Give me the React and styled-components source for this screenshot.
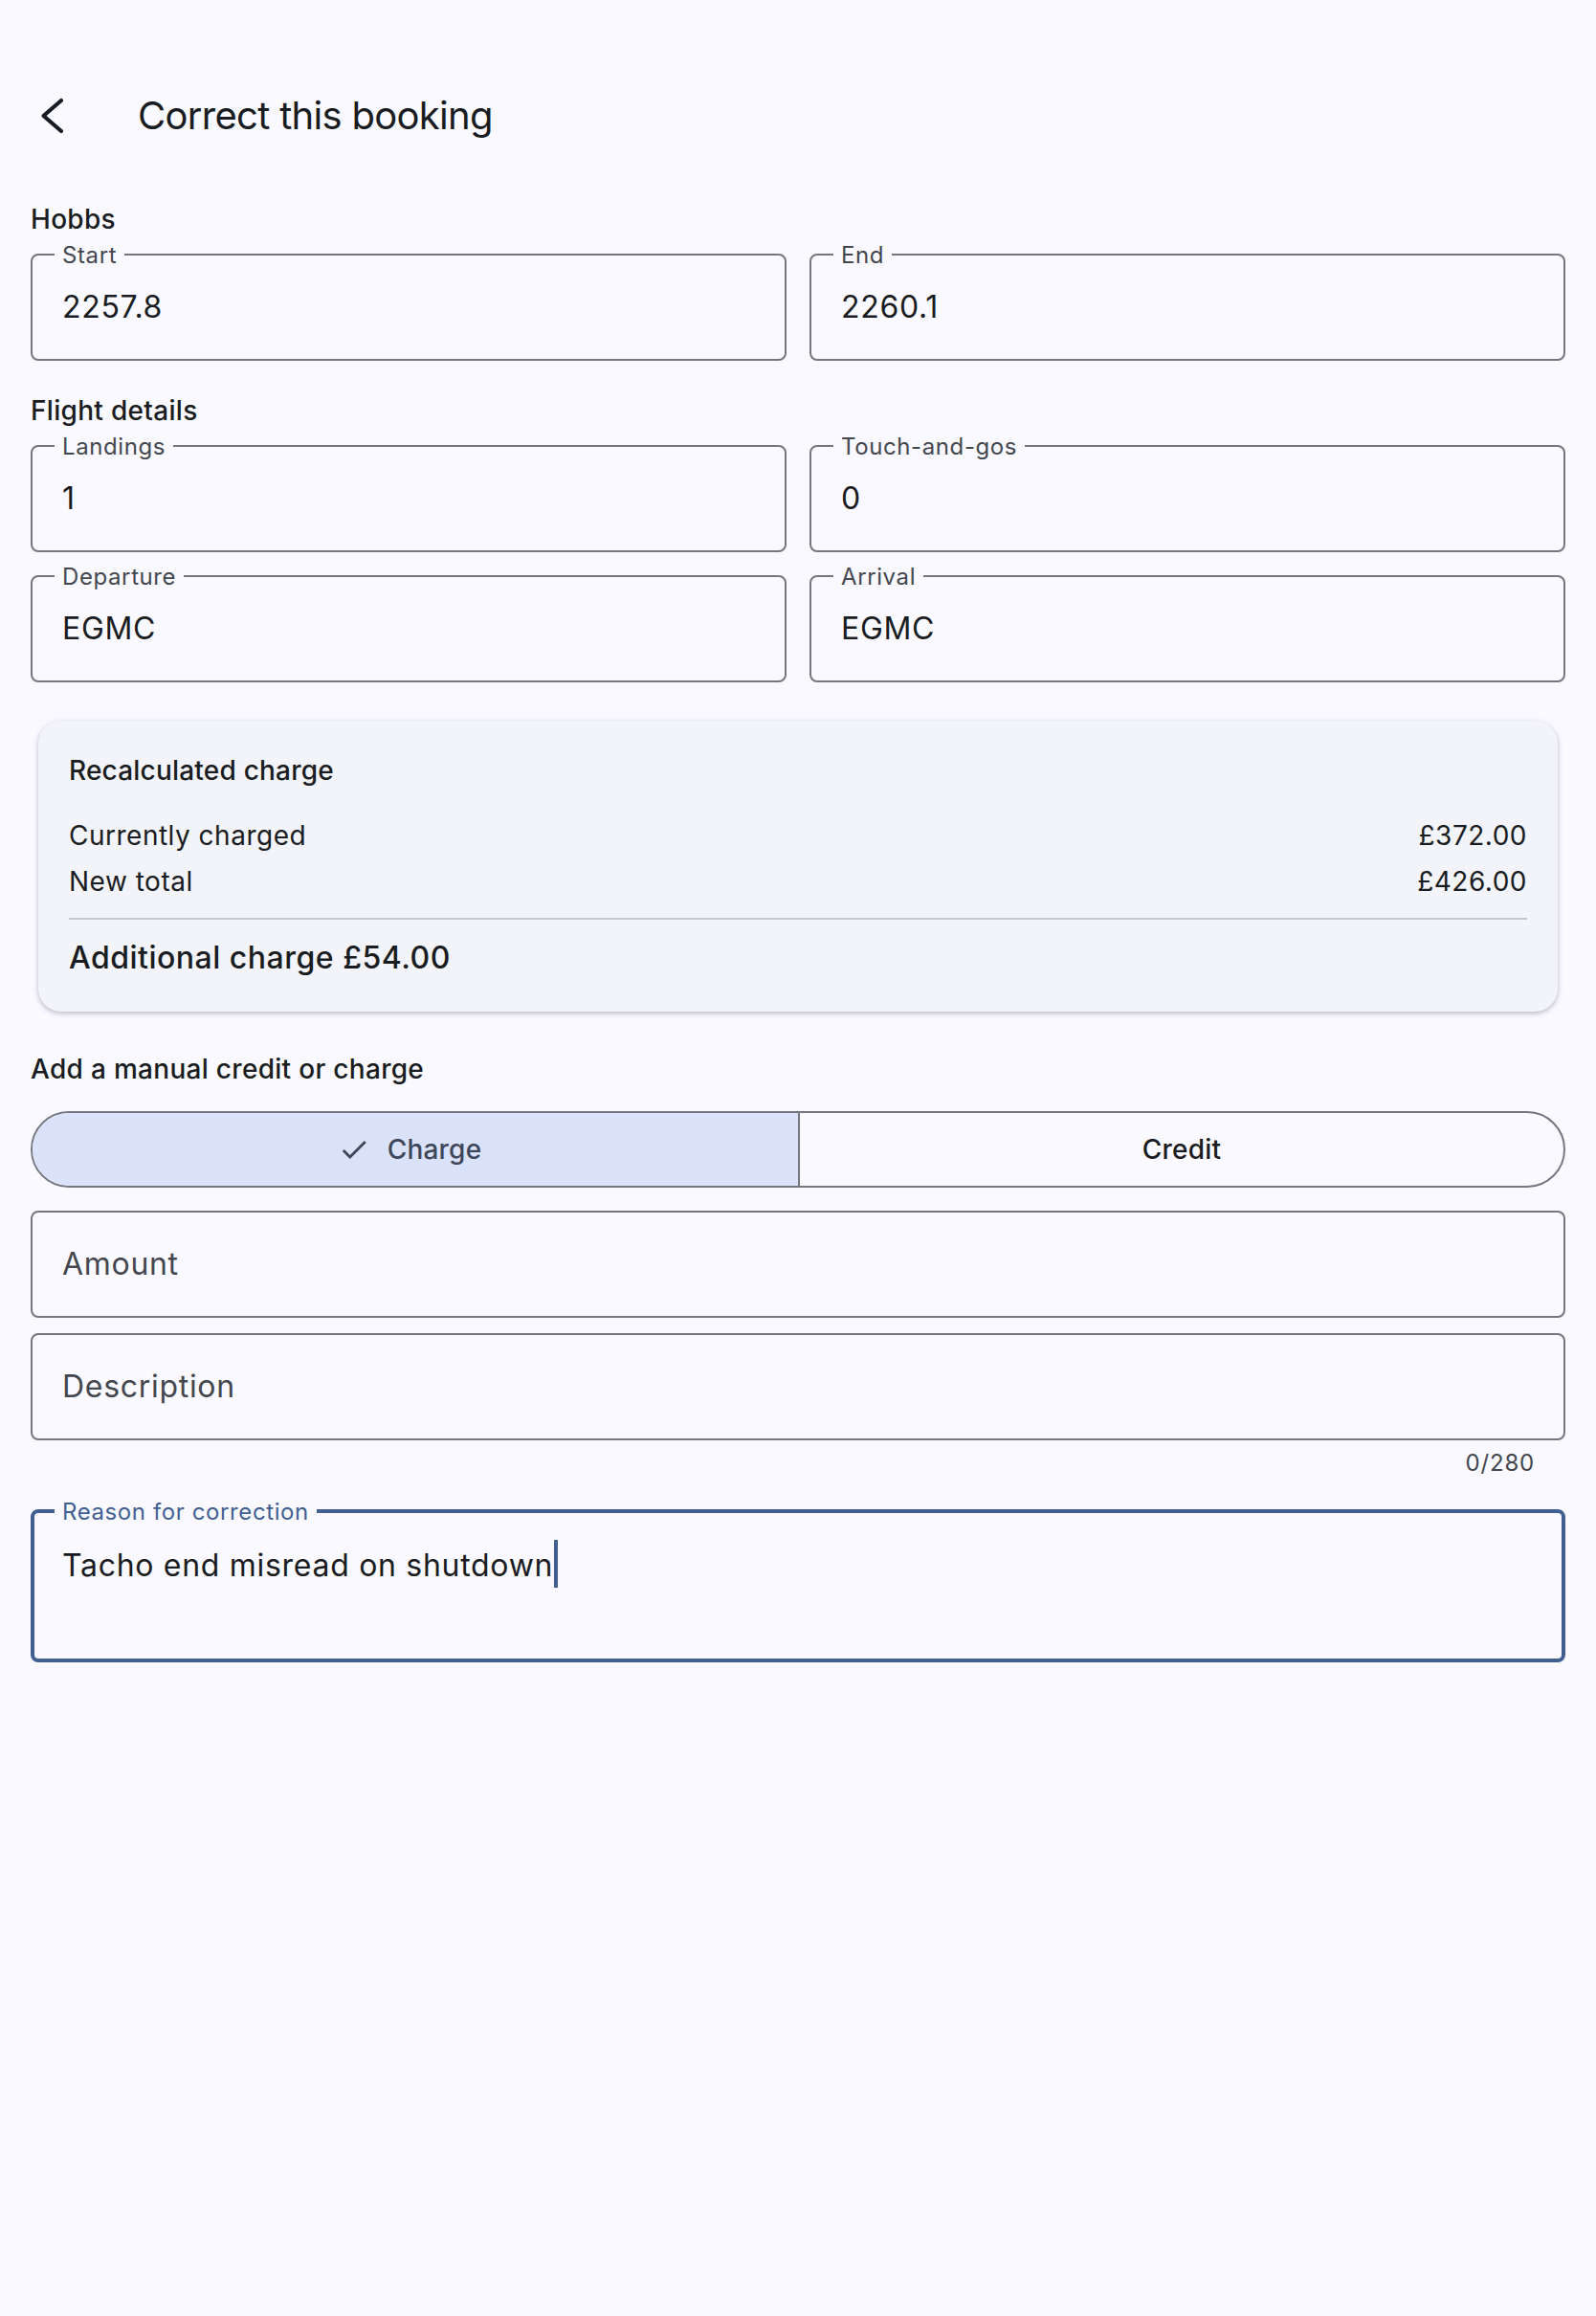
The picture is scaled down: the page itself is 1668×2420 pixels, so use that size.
import React from 'react';
import styled, { createGlobalStyle } from 'styled-components';

const GlobalStyle = createGlobalStyle`
  html, body {
    margin: 0;
    padding: 0;
    background: #f9f9ff;
  }
  body {
    font-family: Inter, Roboto, "Liberation Sans", Arial, sans-serif;
    color: #191c20;
    min-height: 2420px;
  }
  * {
    box-sizing: border-box;
  }
`;

const Screen = styled.div`
  width: 1668px;
  min-height: 2420px;
  background: #f9f9ff;
`;

const TopBar = styled.header`
  margin-top: 57px;
  height: 128px;
  display: flex;
  align-items: center;
`;

const BackButton = styled.button`
  width: 112px;
  height: 112px;
  border: none;
  background: transparent;
  padding: 0;
  display: flex;
  align-items: center;
  justify-content: center;
  color: #191c20;
  cursor: pointer;
`;

const Title = styled.h1`
  margin: 0 0 0 32px;
  font-size: 40px;
  line-height: 56px;
  font-weight: 400;
  letter-spacing: -0.7px;
  color: #191c20;
`;

const Content = styled.main`
  padding: 24px 32px 0;
`;

const SectionLabel = styled.h2`
  margin: ${(p) => p.$top || 0}px 0 ${(p) => p.$bottom || 16}px;
  font-size: 28px;
  line-height: 40px;
  font-weight: 500;
  letter-spacing: 0.3px;
  color: #191c20;
`;

const Grid = styled.div`
  display: grid;
  grid-template-columns: 1fr 1fr;
  column-gap: 24px;
  row-gap: 24px;
`;

const Field = styled.div`
  position: relative;
  min-height: ${(p) => (p.$tall ? 160 : 112)}px;
  border: ${(p) => (p.$focused ? '4px solid #415f91' : '2px solid #74777f')};
  border-radius: 8px;
  padding: ${(p) => (p.$focused ? '28px 29px' : '30px 31px')};
  margin-top: ${(p) => p.$top || 0}px;
`;

const FloatLabel = styled.span`
  position: absolute;
  top: ${(p) => (p.$focused ? -17 : -16)}px;
  left: ${(p) => (p.$focused ? 21 : 23)}px;
  padding: 0 8px;
  background: #f9f9ff;
  font-size: 24px;
  line-height: 32px;
  letter-spacing: 0.6px;
  color: ${(p) => (p.$focused ? '#415f91' : '#44474e')};
`;

const Value = styled.span`
  display: block;
  font-size: 32px;
  line-height: 48px;
  letter-spacing: 0.7px;
  color: ${(p) => (p.$hint ? '#44474e' : '#191c20')};
`;

const Caret = styled.span`
  display: inline-block;
  width: 4px;
  height: 50px;
  margin-left: 1px;
  vertical-align: -12px;
  background: #415f91;
`;

const Counter = styled.div`
  padding: 8px 32px 0 0;
  text-align: right;
  font-size: 24px;
  line-height: 32px;
  letter-spacing: 0.8px;
  color: #44474e;
`;

const Card = styled.section`
  margin: 40px 8px 0;
  padding: 32px;
  border-radius: 24px;
  background: #f3f3fa;
  box-shadow: 0 2px 4px rgba(0, 0, 0, 0.18), 0 2px 6px 2px rgba(0, 0, 0, 0.06);
`;

const CardTitle = styled.h3`
  margin: 0 0 24px;
  font-size: 28px;
  line-height: 40px;
  font-weight: 500;
  letter-spacing: 0.2px;
`;

const Line = styled.div`
  display: flex;
  justify-content: space-between;
  padding: 4px 0;
  font-size: 28px;
  line-height: 40px;
  letter-spacing: 0.5px;
`;

const Divider = styled.hr`
  margin: 14px 0 16px;
  border: none;
  height: 2px;
  background: #c4c6d0;
`;

const Total = styled.div`
  font-size: 32px;
  line-height: 48px;
  font-weight: 500;
  letter-spacing: 0.5px;
`;

const Segmented = styled.div`
  display: grid;
  grid-template-columns: 1fr 1fr;
  height: 80px;
  border: 2px solid #74777f;
  border-radius: 40px;
  overflow: hidden;
`;

const Segment = styled.button`
  display: flex;
  align-items: center;
  justify-content: center;
  gap: 18px;
  border: none;
  border-left: ${(p) => (p.$first ? 'none' : '2px solid #74777f')};
  padding: ${(p) => (p.$selected ? '0 36px 0 24px' : '0 24px')};
  background: ${(p) => (p.$selected ? '#dae2f9' : 'transparent')};
  color: ${(p) => (p.$selected ? '#3e4759' : '#191c20')};
  font-family: inherit;
  font-size: 28px;
  line-height: 40px;
  font-weight: 500;
  letter-spacing: 0.2px;
  cursor: pointer;
`;

const ChevronLeft = () => (
  <svg width="48" height="48" viewBox="0 0 48 48" fill="none">
    <polyline
      points="32,8 13.5,24 32,40"
      stroke="currentColor"
      strokeWidth="4.2"
      strokeLinecap="round"
      strokeLinejoin="round"
    />
  </svg>
);

const CheckIcon = () => (
  <svg width="34" height="34" viewBox="0 0 24 24" fill="currentColor">
    <path d="M9 16.17 4.83 12l-1.42 1.41L9 19 21 7l-1.41-1.41z" />
  </svg>
);

const TextField = ({ label, value, hint, top }) => (
  <Field $top={top}>
    {label && <FloatLabel>{label}</FloatLabel>}
    <Value $hint={hint}>{value || hint}</Value>
  </Field>
);

export default function App() {
  return (
    <Screen>
      <GlobalStyle />
      <TopBar>
        <BackButton aria-label="Back">
          <ChevronLeft />
        </BackButton>
        <Title>Correct this booking</Title>
      </TopBar>

      <Content>
        <SectionLabel>Hobbs</SectionLabel>
        <Grid>
          <TextField label="Start" value="2257.8" />
          <TextField label="End" value="2260.1" />
        </Grid>

        <SectionLabel $top={32}>Flight details</SectionLabel>
        <Grid>
          <TextField label="Landings" value="1" />
          <TextField label="Touch-and-gos" value="0" />
          <TextField label="Departure" value="EGMC" />
          <TextField label="Arrival" value="EGMC" />
        </Grid>

        <Card>
          <CardTitle>Recalculated charge</CardTitle>
          <Line>
            <span>Currently charged</span>
            <span>£372.00</span>
          </Line>
          <Line>
            <span>New total</span>
            <span>£426.00</span>
          </Line>
          <Divider />
          <Total>Additional charge £54.00</Total>
        </Card>

        <SectionLabel $top={40} $bottom={24}>
          Add a manual credit or charge
        </SectionLabel>
        <Segmented>
          <Segment $first $selected>
            <CheckIcon />
            Charge
          </Segment>
          <Segment>Credit</Segment>
        </Segmented>

        <TextField hint="Amount" top={24} />
        <TextField hint="Description" top={16} />
        <Counter>0/280</Counter>

        <Field $focused $tall $top={32}>
          <FloatLabel $focused>Reason for correction</FloatLabel>
          <Value>
            Tacho end misread on shutdown
            <Caret />
          </Value>
        </Field>
      </Content>
    </Screen>
  );
}
